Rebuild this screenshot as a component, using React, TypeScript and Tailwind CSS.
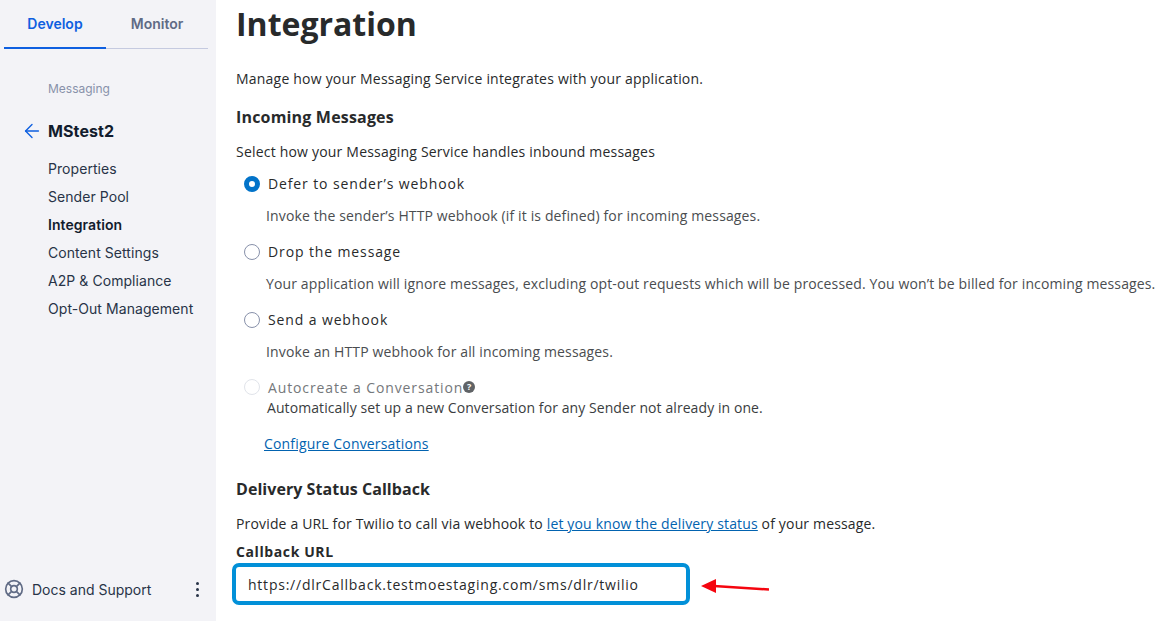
import { ArrowLeft, LifeBuoy } from "lucide-react"

const navItems = ["Properties", "Sender Pool", "Integration", "Content Settings", "A2P & Compliance", "Opt-Out Management"]

const Radio = ({ checked, disabled }: { checked?: boolean; disabled?: boolean }) => {
  if (checked) {
    return <span className="w-4 h-4 rounded-full border-[5px] border-[#0273c9] bg-white shrink-0" />
  }
  return (
    <span
      className={
        disabled
          ? "w-4 h-4 rounded-full border border-[#e1e4ea] bg-white shrink-0"
          : "w-4 h-4 rounded-full border border-[#8891aa] bg-white shrink-0"
      }
    />
  )
}

const Option = ({ label, desc, checked }: { label: string; desc: string; checked?: boolean }) => (
  <div className="h-[68px] pl-2">
    <div className="flex items-center gap-2 h-6">
      <Radio checked={checked} />
      <span className="pb-[2px] text-[14px] font-medium tracking-[0.88px] text-[#282a2b]">{label}</span>
    </div>
    <p className="mt-2 pl-[22px] text-[14px] leading-6 tracking-[0.13px] text-[#4a4d50] whitespace-nowrap">{desc}</p>
  </div>
)

export default function App() {
  return (
    <div className="relative flex w-[1173px] h-[621px] overflow-hidden bg-white font-['Open_Sans',sans-serif]">
      <aside className="w-[216px] shrink-0 h-full bg-[#f3f3f7] flex flex-col font-['Inter',sans-serif]">
        <div className="flex ml-1 mr-2 h-[49px] border-b border-[#c5cae0]">
          <div className="w-[102px] h-[49px] border-b-2 border-[#0e5fe0] flex items-center justify-center text-[14px] font-semibold text-[#0e5fe0] pb-[1px]">
            Develop
          </div>
          <div className="w-[102px] flex items-center justify-center text-[14px] font-semibold text-[#606b85] pb-[1px]">
            Monitor
          </div>
        </div>
        <div className="pl-12 mt-[32px] text-[12px] leading-4 text-[#8891aa]">Messaging</div>
        <div className="flex items-center mt-[22px] pl-[21px] h-6">
          <ArrowLeft className="w-[22px] h-[22px] text-[#0e5fe0] mr-[5px]" strokeWidth={1.5} />
          <span className="text-[16px] font-bold tracking-[0.1px] text-[#121c2d]">MStest2</span>
        </div>
        <nav className="mt-[11px] pl-12 flex flex-col tracking-[0.06px]">
          {navItems.map((item) => (
            <a
              key={item}
              className={
                item === "Integration"
                  ? "h-7 flex items-center text-[14px] font-semibold text-[#121c2d]"
                  : "h-7 flex items-center text-[14px] text-[#283347]"
              }
            >
              {item}
            </a>
          ))}
        </nav>
        <div className="mt-auto mb-[20px] flex items-center h-6 pl-[4px] pr-[17px]">
          <LifeBuoy className="w-5 h-5 text-[#606b85]" strokeWidth={2} />
          <span className="ml-[8px] text-[14px] text-[#283347]">Docs and Support</span>
          <span className="ml-auto flex flex-col gap-[3px]">
            <span className="w-[3px] h-[3px] rounded-full bg-[#283347]" />
            <span className="w-[3px] h-[3px] rounded-full bg-[#283347]" />
            <span className="w-[3px] h-[3px] rounded-full bg-[#283347]" />
          </span>
        </div>
      </aside>

      <main className="flex-1 pl-5 text-[#282a2b] min-w-0 tracking-[0.18px]">
        <h1 className="text-[32px] leading-[48px] font-bold tracking-normal text-[#282a2b]">Integration</h1>
        <p className="mt-[19px] text-[14px] leading-6 tracking-[0.21px]">Manage how your Messaging Service integrates with your application.</p>
        <h2 className="mt-[14px] text-[16px] leading-6 font-bold">Incoming Messages</h2>
        <p className="mt-[11px] text-[14px] leading-6 tracking-[0.2px]">Select how your Messaging Service handles inbound messages</p>

        <div className="mt-[8px]">
          <Option checked label="Defer to sender’s webhook" desc="Invoke the sender’s HTTP webhook (if it is defined) for incoming messages." />
          <Option
            label="Drop the message"
            desc="Your application will ignore messages, excluding opt-out requests which will be processed. You won’t be billed for incoming messages."
          />
          <Option label="Send a webhook" desc="Invoke an HTTP webhook for all incoming messages." />
          <div className="pl-2 -mt-[1px]">
            <div className="flex items-center gap-2 h-6">
              <Radio disabled />
              <span className="text-[14px] font-medium tracking-[0.88px] text-[#75787b]">Autocreate a Conversation</span>
              <span className="-ml-2 w-3 h-3 rounded-full bg-[#606366] text-white text-[9px] leading-3 font-bold text-center tracking-normal">?</span>
            </div>
            <p className="-mt-[3px] pl-[23px] text-[14px] leading-6 tracking-[0.08px] text-[#3a3d40]">
              Automatically set up a new Conversation for any Sender not already in one.
            </p>
          </div>
          <a className="block mt-[12px] pl-7 text-[14px] leading-6 text-[#0263b0] underline">Configure Conversations</a>
        </div>

        <h2 className="mt-[21px] text-[16px] leading-6 font-bold tracking-[0.05px]">Delivery Status Callback</h2>
        <p className="mt-[11px] text-[14px] leading-6 tracking-[0.16px]">
          Provide a URL for Twilio to call via webhook to{" "}
          <a className="text-[#0263b0] underline">let you know the delivery status</a> of your message.
        </p>
        <div className="mt-[4px] text-[14px] leading-6 font-bold tracking-[0.6px]">Callback URL</div>
        <div className="-mt-[1px] -ml-[4px] w-[458px] h-[42px] rounded-[7px] border-[4px] border-[#0290d8] flex items-center pl-[12px] text-[14px] tracking-[0.77px] text-[#282a2b]">
          https://dlrCallback.testmoestaging.com/sms/dlr/twilio
        </div>
      </main>

      <svg className="absolute left-[700px] top-[578px]" width="70" height="18" viewBox="0 0 70 18">
        <path d="M14 8 L69 11.5" stroke="#f5050f" strokeWidth="2.5" fill="none" />
        <path d="M1 8 L16 1 L16 15 Z" fill="#f5050f" />
      </svg>
    </div>
  )
}
